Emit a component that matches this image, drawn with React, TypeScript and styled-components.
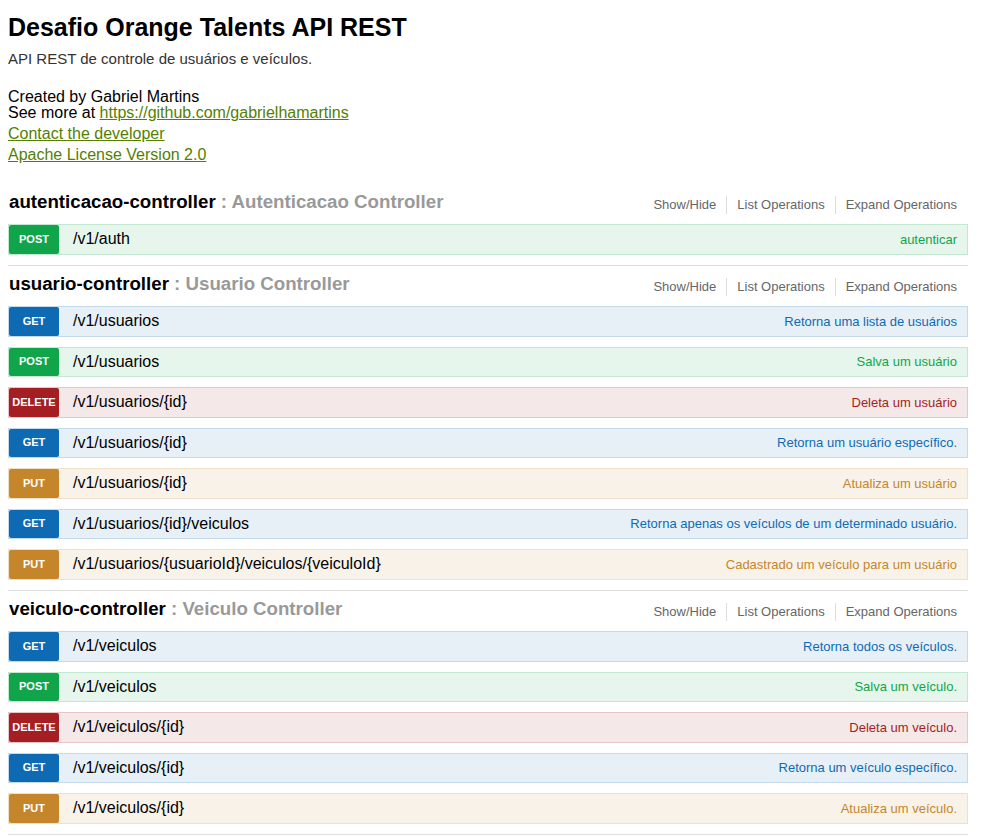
import React from "react";
import styled, { createGlobalStyle } from "styled-components";

const Global = createGlobalStyle`
  html, body { margin: 0; padding: 0; background: #ffffff; }
  body { font-family: "Liberation Sans", Arial, sans-serif; color: #000; }
`;

type Method = "GET" | "POST" | "PUT" | "DELETE";

const palette: Record<Method, { main: string; bg: string; border: string }> = {
  GET: { main: "#0f6ab4", bg: "#e7f0f7", border: "#c3d9ec" },
  POST: { main: "#10a54a", bg: "#e7f6ec", border: "#c3e8d1" },
  PUT: { main: "#c5862b", bg: "#f9f2e9", border: "#f0e0ca" },
  DELETE: { main: "#a41e22", bg: "#f5e8e8", border: "#e8c6c7" },
};

const Wrap = styled.div`
  width: 960px;
  margin: 0 0 0 8px;
  padding-top: 15px;
  line-height: 1;
`;

const Info = styled.div`
  display: flex;
  flex-direction: column;
  padding-bottom: 20.5px;
`;

const Title = styled.h1`
  margin: 0 0 11px;
  font-size: 25px;
  font-weight: bold;
  line-height: 1;
  color: #000;
`;

const Description = styled.p`
  margin: 0 0 23px;
  font-size: 15px;
  line-height: 1;
  color: #333;
`;

const InfoLine = styled.div<{ $gap?: number }>`
  font-size: 16px;
  line-height: 16px;
  margin-top: ${(p) => p.$gap ?? 0}px;
  color: #000;
`;

const Link = styled.a`
  color: #547f00;
  text-decoration: underline;
`;

const Section = styled.section`
  border-bottom: 1px solid #ddd;
`;

const Heading = styled.div`
  height: 40.5px;
  display: flex;
  align-items: center;
  justify-content: space-between;
  padding-bottom: 3px;
  box-sizing: border-box;
`;

const HeadingTitle = styled.h2`
  margin: 0;
  font-size: 18.7px;
  font-weight: bold;
  color: #999;
  padding-left: 1px;
`;

const HeadingName = styled.span`
  color: #000;
`;

const Options = styled.ul`
  list-style: none;
  margin: 6px 1px 0 0;
  padding: 0;
  display: flex;
  align-items: center;
`;

const Option = styled.li<{ $first?: boolean }>`
  font-size: 13px;
  color: #666;
  padding: 0 10px;
  border-left: ${(p) => (p.$first ? "none" : "1px solid #ddd")};
  line-height: 18px;
`;

const Row = styled.div<{ $m: Method }>`
  height: 30.5px;
  box-sizing: border-box;
  margin-bottom: 10px;
  display: flex;
  align-items: center;
  background: ${(p) => palette[p.$m].bg};
  border: 1px solid ${(p) => palette[p.$m].border};
`;

const Badge = styled.span<{ $m: Method }>`
  flex: 0 0 50px;
  align-self: stretch;
  display: flex;
  align-items: center;
  justify-content: center;
  background: ${(p) => palette[p.$m].main};
  color: #fff;
  font-size: 11px;
  font-weight: bold;
  border-radius: 2px;
  text-transform: uppercase;
`;

const Path = styled.span`
  padding-left: 14px;
  font-size: 16px;
  color: #000;
  flex: 1;
`;

const Summary = styled.span<{ $m: Method }>`
  font-size: 13px;
  color: ${(p) => palette[p.$m].main};
  padding-right: 10px;
`;

type Op = { m: Method; path: string; summary: string };
type Res = { name: string; label: string; ops: Op[] };

const resources: Res[] = [
  {
    name: "autenticacao-controller",
    label: "Autenticacao Controller",
    ops: [{ m: "POST", path: "/v1/auth", summary: "autenticar" }],
  },
  {
    name: "usuario-controller",
    label: "Usuario Controller",
    ops: [
      { m: "GET", path: "/v1/usuarios", summary: "Retorna uma lista de usuários" },
      { m: "POST", path: "/v1/usuarios", summary: "Salva um usuário" },
      { m: "DELETE", path: "/v1/usuarios/{id}", summary: "Deleta um usuário" },
      { m: "GET", path: "/v1/usuarios/{id}", summary: "Retorna um usuário específico." },
      { m: "PUT", path: "/v1/usuarios/{id}", summary: "Atualiza um usuário" },
      {
        m: "GET",
        path: "/v1/usuarios/{id}/veiculos",
        summary: "Retorna apenas os veículos de um determinado usuário.",
      },
      {
        m: "PUT",
        path: "/v1/usuarios/{usuarioId}/veiculos/{veiculoId}",
        summary: "Cadastrado um veículo para um usuário",
      },
    ],
  },
  {
    name: "veiculo-controller",
    label: "Veiculo Controller",
    ops: [
      { m: "GET", path: "/v1/veiculos", summary: "Retorna todos os veículos." },
      { m: "POST", path: "/v1/veiculos", summary: "Salva um veículo." },
      { m: "DELETE", path: "/v1/veiculos/{id}", summary: "Deleta um veículo." },
      { m: "GET", path: "/v1/veiculos/{id}", summary: "Retorna um veículo específico." },
      { m: "PUT", path: "/v1/veiculos/{id}", summary: "Atualiza um veículo." },
    ],
  },
];

export default function App() {
  return (
    <>
      <Global />
      <Wrap>
        <Info>
          <Title>Desafio Orange Talents API REST</Title>
          <Description>API REST de controle de usuários e veículos.</Description>
          <InfoLine>Created by Gabriel Martins</InfoLine>
          <InfoLine>
            See more at <Link href="#">https://github.com/gabrielhamartins</Link>
          </InfoLine>
          <InfoLine $gap={5}>
            <Link href="#">Contact the developer</Link>
          </InfoLine>
          <InfoLine $gap={5}>
            <Link href="#">Apache License Version 2.0</Link>
          </InfoLine>
        </Info>
        {resources.map((r) => (
          <Section key={r.name}>
            <Heading>
              <HeadingTitle>
                <HeadingName>{r.name}</HeadingName> : {r.label}
              </HeadingTitle>
              <Options>
                <Option $first>Show/Hide</Option>
                <Option>List Operations</Option>
                <Option>Expand Operations</Option>
              </Options>
            </Heading>
            {r.ops.map((o, i) => (
              <Row key={i} $m={o.m}>
                <Badge $m={o.m}>{o.m}</Badge>
                <Path>{o.path}</Path>
                <Summary $m={o.m}>{o.summary}</Summary>
              </Row>
            ))}
          </Section>
        ))}
      </Wrap>
    </>
  );
}
